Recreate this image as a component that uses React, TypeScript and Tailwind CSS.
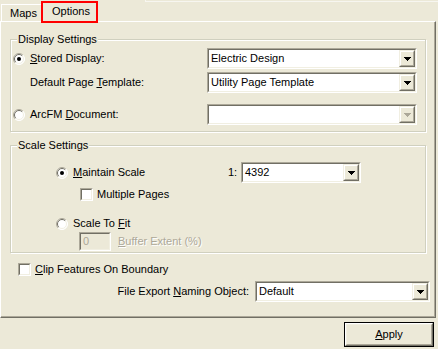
import React from 'react';

const face = 'bg-[#ECE9D8]';

const Arrow = ({ disabled }: { disabled?: boolean }) => (
  <svg width="7" height="4" viewBox="0 0 7 4" shapeRendering="crispEdges">
    <g fill={disabled ? '#ACA899' : '#000'}>
      <rect x="0" y="0" width="7" height="1" />
      <rect x="1" y="1" width="5" height="1" />
      <rect x="2" y="2" width="3" height="1" />
      <rect x="3" y="3" width="1" height="1" />
    </g>
  </svg>
);

const Sunken: React.FC<{ className: string; children?: React.ReactNode; inner?: string }> = ({
  className,
  children,
  inner = 'bg-white',
}) => (
  <div
    className={`${className} border border-t-[#ACA899] border-l-[#ACA899] border-b-white border-r-white`}
  >
    <div
      className={`flex h-full border border-t-[#716F64] border-l-[#716F64] border-b-[#F1EFE2] border-r-[#F1EFE2] ${inner}`}
    >
      {children}
    </div>
  </div>
);

type ComboProps = { text?: string; className: string; disabled?: boolean };

const Combo: React.FC<ComboProps> = ({ text, className, disabled }) => (
  <Sunken className={`${className} h-[21px] shrink-0`}>
    <div className="flex-1 pl-[2px] leading-[17px] truncate">{text}</div>
    <div className="w-[16px] h-full border border-t-[#F1EFE2] border-l-[#F1EFE2] border-b-[#716F64] border-r-[#716F64]">
      <div
        className={`flex h-full items-center justify-center border border-t-white border-l-white border-b-[#ACA899] border-r-[#ACA899] ${face}`}
      >
        <Arrow disabled={disabled} />
      </div>
    </div>
  </Sunken>
);

const Radio = ({ checked }: { checked?: boolean }) => (
  <svg width="12" height="12" viewBox="0 0 12 12" className="shrink-0">
    <circle cx="6" cy="6" r="5.5" fill="#fff" />
    <path d="M2.1 9.9A5.5 5.5 0 0 1 9.9 2.1" fill="none" stroke="#ACA899" />
    <path d="M9.9 2.1A5.5 5.5 0 0 1 2.1 9.9" fill="none" stroke="#fff" />
    <path d="M2.8 9.2A4.5 4.5 0 0 1 9.2 2.8" fill="none" stroke="#716F64" />
    <path d="M9.2 2.8A4.5 4.5 0 0 1 2.8 9.2" fill="none" stroke="#F1EFE2" />
    {checked && <circle cx="6" cy="6" r="2" fill="#000" />}
  </svg>
);

const Check = () => <Sunken className="w-[13px] h-[13px] shrink-0" />;

const Group: React.FC<{ title: string; className: string; children: React.ReactNode }> = ({
  title,
  className,
  children,
}) => (
  <div
    className={`${className} border border-[#D0D0BF] shadow-[inset_1px_1px_0_#fff,1px_1px_0_#fff]`}
  >
    <div className={`-mt-[7px] ml-[6px] w-fit px-[1px] h-[13px] leading-[13px] ${face}`}>
      {title}
    </div>
    {children}
  </div>
);

const disabledText = 'text-[#ACA899] [text-shadow:1px_1px_0_#fff]';

export default function App() {
  return (
    <div
      className={`w-[438px] h-[349px] overflow-hidden ${face} text-[11px] text-black`}
      style={{ fontFamily: '"Liberation Sans", Arial, sans-serif' }}
    >
      {/* tab strip */}
      <div className="flex h-[21px] items-start">
        <div className="ml-[1px] mt-[4px] h-[17px] w-[40px] border-l border-t border-white pl-[8px] leading-[16px]">
          Maps
        </div>
        <div className="relative z-10 mt-[1px] h-[22px] w-[57px] border-2 border-[#FF0000] pl-[9px] leading-[17px]">
          Options
        </div>
        <div className="ml-[47px] h-[2px] flex-1 border-l border-b border-[#F7F6F0]" />
      </div>

      {/* tab panel */}
      <div className="w-[436px] h-[297px] border-l border-t border-white border-r border-r-[#716F64] border-b border-b-[#716F64] shadow-[inset_-1px_-1px_0_#ACA899]">
        <Group title="Display Settings" className="mt-[17px] ml-[9px] w-[416px] h-[93px]">
          <div className="mt-[2px] flex h-[21px] items-center justify-between pl-[2px] pr-[8px]">
            <div className="flex items-center gap-[5px]">
              <Radio checked />
              <span>
                <u>S</u>tored Display:
              </span>
            </div>
            <Combo text="Electric Design" className="w-[210px]" />
          </div>
          <div className="mt-[3px] flex h-[21px] items-center justify-between pl-[19px] pr-[8px]">
            <span>
              Default Page <u>T</u>emplate:
            </span>
            <Combo text="Utility Page Template" className="w-[210px]" />
          </div>
          <div className="mt-[11px] flex h-[21px] items-center justify-between pl-[2px] pr-[8px]">
            <div className="flex items-center gap-[5px]">
              <Radio />
              <span>
                ArcFM <u>D</u>ocument:
              </span>
            </div>
            <Combo className="w-[210px]" disabled />
          </div>
        </Group>

        <Group title="Scale Settings" className="mt-[13px] ml-[9px] w-[416px] h-[108px]">
          <div className="mt-[10px] flex h-[21px] items-center pl-[45px]">
            <div className="flex w-[172px] items-center gap-[5px]">
              <Radio checked />
              <span>
                <u>M</u>aintain Scale
              </span>
            </div>
            <span className="w-[13px]">1:</span>
            <Combo text="4392" className="w-[120px]" />
          </div>
          <div className="mt-[5px] flex h-[13px] items-center gap-[4px] pl-[69px]">
            <Check />
            <span>Multiple Pages</span>
          </div>
          <div className="mt-[16px] flex h-[13px] items-center gap-[5px] pl-[45px]">
            <Radio />
            <span>
              Scale To <u>F</u>it
            </span>
          </div>
          <div className="mt-[2px] flex h-[19px] items-center gap-[7px] pl-[68px]">
            <Sunken className="w-[32px] h-[19px]" inner={face}>
              <span className="pl-[2px] leading-[15px] text-[#ACA899]">0</span>
            </Sunken>
            <span className={disabledText}>
              <u>B</u>uffer Extent (%)
            </span>
          </div>
        </Group>

        <div className="mt-[10px] flex h-[13px] items-center gap-[4px] pl-[17px]">
          <Check />
          <span>
            <u>C</u>lip Features On Boundary
          </span>
        </div>

        <div className="mt-[5px] flex h-[21px] items-center justify-end pr-[5px]">
          <span className="mr-[6px]">
            File Export <u>N</u>aming Object:
          </span>
          <Combo text="Default" className="w-[175px]" />
        </div>
      </div>

      {/* buttons */}
      <div className="mt-[4px] flex justify-end pr-[4px]">
        <div className="w-[90px] h-[25px] border border-black">
          <div className="h-full border border-t-white border-l-white border-b-[#716F64] border-r-[#716F64]">
            <div className="flex h-full items-center justify-center border border-t-[#F1EFE2] border-l-[#F1EFE2] border-b-[#ACA899] border-r-[#ACA899]">
              <span>
                <u>A</u>pply
              </span>
            </div>
          </div>
        </div>
      </div>
    </div>
  );
}
